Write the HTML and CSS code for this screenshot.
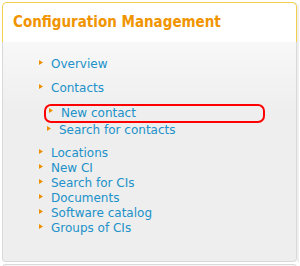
FILE: index.html
```html
<!DOCTYPE html>
<html lang="en">
<head>
    <meta charset="UTF-8">
    <meta name="viewport" content="width=device-width, initial-scale=1.0">
    <title>Configuration Management</title>
    <link rel="stylesheet" href="styles.css">
</head>
<body>
    <!-- Menu box -->
    <div class="box">
        <div class="boxHeader">
            <h2>Configuration Management</h2>
        </div>
        <div class="boxBody">
            <ul class="menu">
                <li class="spaced"><a href="#">Overview</a></li>
                <li>
                    <a href="#">Contacts</a>
                    <ul class="subMenu">
                        <li class="current"><a href="#">New contact</a></li>
                        <li><a href="#">Search for contacts</a></li>
                    </ul>
                </li>
                <li><a href="#">Locations</a></li>
                <li><a href="#">New CI</a></li>
                <li><a href="#">Search for CIs</a></li>
                <li><a href="#">Documents</a></li>
                <li><a href="#">Software catalog</a></li>
                <li><a href="#">Groups of CIs</a></li>
            </ul>
        </div>
    </div>

    <!-- Next box (cut off) -->
    <div class="nextBox"></div>
</body>
</html>
```

FILE: styles.css
```css
body {
    margin: 0;
    font-family: "DejaVu Sans", Verdana, sans-serif;
    background-color: #fff;
}

.box {
    margin: 2px 3px 0 2px;
    box-shadow: 2px 0 0 #efefef;
    border-radius: 5px 5px 0 0;
}

.boxHeader {
    background-color: #fff;
    border: 1px solid #f4cf4b;
    border-bottom: none;
    border-radius: 5px 5px 0 0;
    padding: 10px 10px 11px 10px;
}

.boxHeader h2 {
    margin: 0;
    font-family: "DejaVu Sans Condensed", "DejaVu Sans", sans-serif;
    font-stretch: condensed;
    font-size: 15px;
    line-height: 18px;
    font-weight: bold;
    color: #f09400;
}

.boxBody {
    background: linear-gradient(#f8f8f8, #eeeeee 70px);
    border: 1px solid #d9d9d9;
    border-top: none;
    border-radius: 0 0 4px 4px;
    padding: 15px 0 25px 33px;
}

.menu, .subMenu {
    list-style: none;
    margin: 0;
    padding: 0;
}

.menu li {
    position: relative;
    padding-left: 15px;
    font-size: 12px;
    line-height: 15px;
}

/* small orange arrow */
.menu li::before {
    content: "";
    position: absolute;
    left: 3px;
    top: 3px;
    width: 4px;
    height: 5px;
    background-color: #ec9000;
    clip-path: polygon(0 0, 100% 50%, 0 100%);
}

.menu a {
    color: #2091c9;
    text-decoration: none;
}

.menu .spaced {
    margin-bottom: 9px;
}

.subMenu {
    margin: 8px 0 8px -7px;
}

.subMenu .current {
    width: 221px;
    box-sizing: border-box;
    border: 2px solid #f00;
    border-radius: 7px;
}

.subMenu .current::before {
    left: 3px;
    top: 2px;
}

.nextBox {
    margin: 2px 3px 0 2px;
    height: 10px;
    border: 1px solid #d9d9d9;
    border-bottom: none;
    border-radius: 4px 4px 0 0;
    background-color: #f8f8f8;
}
```
